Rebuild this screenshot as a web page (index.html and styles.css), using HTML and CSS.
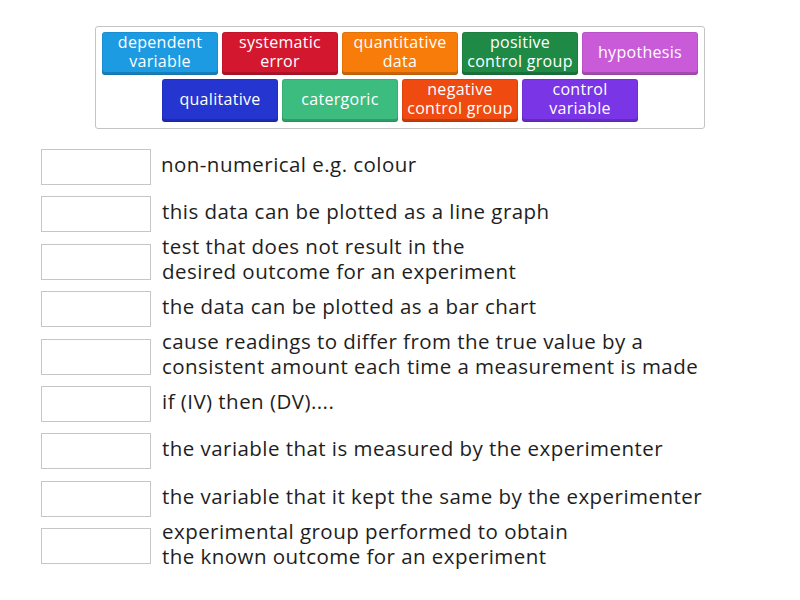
FILE: index.html
```html
<!DOCTYPE html>
<html>
<head>
<meta charset="utf-8">
<link rel="stylesheet" href="styles.css">
</head>
<body>
<div class="bank">
  <div class="tile c-blue">dependent<br>variable</div>
  <div class="tile c-red">systematic<br>error</div>
  <div class="tile c-orange">quantitative<br>data</div>
  <div class="tile c-green">positive<br>control group</div>
  <div class="tile c-pink">hypothesis</div>
  <div class="tile c-navy">qualitative</div>
  <div class="tile c-mint">catergoric</div>
  <div class="tile c-redorange">negative<br>control group</div>
  <div class="tile c-violet">control<br>variable</div>
</div>
<div class="list">
  <div class="row"><div class="slot"></div><div class="text first">non-numerical e.g. colour</div></div>
  <div class="row"><div class="slot"></div><div class="text">this data can be plotted as a line graph</div></div>
  <div class="row"><div class="slot"></div><div class="text">test that does not result in the<br>desired outcome for an experiment</div></div>
  <div class="row"><div class="slot"></div><div class="text">the data can be plotted as a bar chart</div></div>
  <div class="row"><div class="slot"></div><div class="text">cause readings to differ from the true value by a<br>consistent amount each time a measurement is made</div></div>
  <div class="row"><div class="slot"></div><div class="text">if (IV) then (DV)....</div></div>
  <div class="row"><div class="slot"></div><div class="text">the variable that is measured by the experimenter</div></div>
  <div class="row"><div class="slot"></div><div class="text">the variable that it kept the same by the experimenter</div></div>
  <div class="row"><div class="slot"></div><div class="text">experimental group performed to obtain<br>the known outcome for an experiment</div></div>
</div>
</body>
</html>
```
FILE: styles.css
```css
html, body {
  margin: 0;
  padding: 0;
  background: #ffffff;
  font-family: "Open Sans", "Noto Sans", sans-serif;
}
body {
  min-height: 600px;
}
.bank {
  box-sizing: border-box;
  margin: 26px 0 0 95px;
  width: 610px;
  height: 103px;
  border: 1px solid #c4c4c4;
  border-radius: 3px;
  padding: 5px;
  display: flex;
  flex-wrap: wrap;
  justify-content: center;
  align-content: flex-start;
  gap: 4px;
}
.tile {
  box-sizing: border-box;
  width: 116px;
  height: 43px;
  border-radius: 3px;
  color: #ffffff;
  font-size: 16px;
  letter-spacing: 0.3px;
  line-height: 19px;
  text-align: center;
  display: flex;
  align-items: center;
  justify-content: center;
  padding-bottom: 3px;
  box-shadow: inset 0 -3px 0 rgba(0,0,0,0.18), inset 0 0 0 1px rgba(0,0,0,0.08);
}
.c-blue { background: #1c9be3; }
.c-red { background: #d3172f; }
.c-orange { background: #f77c09; }
.c-green { background: #1f8a46; }
.c-pink { background: #c95bd8; }
.c-navy { background: #2535cf; }
.c-mint { background: #3cbd7f; }
.c-redorange { background: #ef4a0f; }
.c-violet { background: #7a35e6; }
.list {
  margin: 20px 0 0 41px;
  padding-bottom: 30px;
  display: flex;
  flex-direction: column;
  gap: 11.4px;
}
.row {
  height: 36px;
  display: flex;
  align-items: center;
}
.slot {
  box-sizing: border-box;
  width: 110px;
  height: 36px;
  border: 1px solid #c6c6c6;
  background: #ffffff;
  flex: none;
}
.text {
  margin-left: 11px;
  padding-bottom: 5px;
  font-size: 20.5px;
  letter-spacing: 0.45px;
  line-height: 25px;
  color: #1e1e1e;
  white-space: nowrap;
}
.text.first {
  margin-left: 10px;
}
```
